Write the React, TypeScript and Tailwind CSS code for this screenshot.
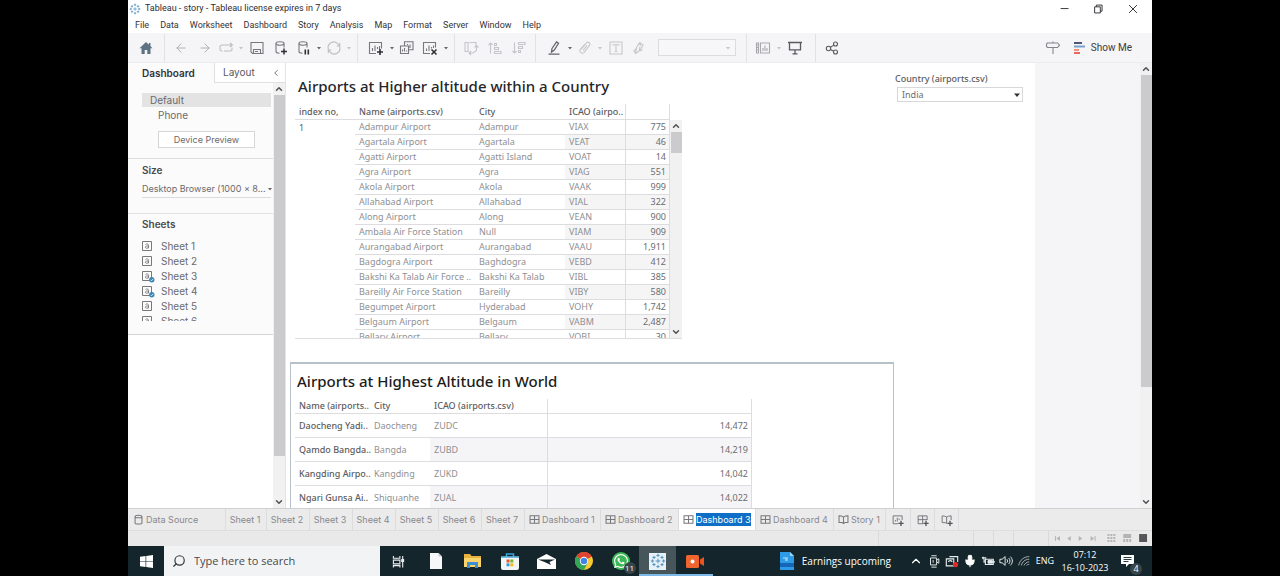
import React from "react";
import { ArrowLeft, ArrowRight, ChevronUp, ChevronDown, ChevronLeft, Search, Mic } from "lucide-react";
import { FaWhatsapp } from "react-icons/fa";

type Children = { children?: React.ReactNode };

const menus = ["File", "Data", "Worksheet", "Dashboard", "Story", "Analysis", "Map", "Format", "Server", "Window", "Help"];

const indian: [string, string, string, string][] = [
  ["Adampur Airport", "Adampur", "VIAX", "775"],
  ["Agartala Airport", "Agartala", "VEAT", "46"],
  ["Agatti Airport", "Agatti Island", "VOAT", "14"],
  ["Agra Airport", "Agra", "VIAG", "551"],
  ["Akola Airport", "Akola", "VAAK", "999"],
  ["Allahabad Airport", "Allahabad", "VIAL", "322"],
  ["Along Airport", "Along", "VEAN", "900"],
  ["Ambala Air Force Station", "Null", "VIAM", "909"],
  ["Aurangabad Airport", "Aurangabad", "VAAU", "1,911"],
  ["Bagdogra Airport", "Baghdogra", "VEBD", "412"],
  ["Bakshi Ka Talab Air Force ..", "Bakshi Ka Talab", "VIBL", "385"],
  ["Bareilly Air Force Station", "Bareilly", "VIBY", "580"],
  ["Begumpet Airport", "Hyderabad", "VOHY", "1,742"],
  ["Belgaum Airport", "Belgaum", "VABM", "2,487"],
  ["Bellary Airport", "Bellary", "VOBI", "30"],
];

const world: [string, string, string, string][] = [
  ["Daocheng Yadi..", "Daocheng", "ZUDC", "14,472"],
  ["Qamdo Bangda..", "Bangda", "ZUBD", "14,219"],
  ["Kangding Airpo..", "Kangding", "ZUKD", "14,042"],
  ["Ngari Gunsa Ai..", "Shiquanhe", "ZUAL", "14,022"],
];

function Glyph({ children, className = "text-[#77777c]" }: Children & { className?: string }) {
  return (
    <svg viewBox="0 0 16 16" className={`h-4 w-4 ${className}`} fill="none" stroke="currentColor" strokeWidth="1.1" aria-hidden="true">
      {children}
    </svg>
  );
}

function Tool({ label, width = "w-6", children }: Children & { label: string; width?: string }) {
  return (
    <button aria-label={label} className={`flex h-6 shrink-0 items-center justify-center ${width}`}>
      {children}
    </button>
  );
}

function Caret({ dim = false }: { dim?: boolean }) {
  return (
    <svg viewBox="0 0 8 8" className={`h-2 w-2 shrink-0 ${dim ? "text-[#c4c4c8]" : "text-[#66666b]"}`} aria-hidden="true">
      <path d="M2 3h4L4 5.4z" fill="currentColor" />
    </svg>
  );
}

const Sep = ({ space = "mx-1" }: { space?: string }) => <span className={`h-7 w-px shrink-0 bg-[#e2e2e5] ${space}`} />;

const dim = "text-[#c6c6ca]";

function Toolbar() {
  return (
    <div className="flex h-[30px] shrink-0 items-center border-b border-[#ececee] bg-[#f5f4f6]">
      <Tool label="Start page" width="w-9">
        <Glyph className="text-[#5d7282]">
          <path d="M8 2 1.5 8.3h2V14h3.2v-4h2.6v4h3.2V8.3h2L12.5 6.200V3h-1.600v1.700z" fill="currentColor" stroke="none" />
        </Glyph>
      </Tool>
      <Sep space="mr-1" />
      <Tool label="Undo"><ArrowLeft className="size-3.5 text-[#acacb0]" strokeWidth={1.6} /></Tool>
      <Tool label="Redo"><ArrowRight className="size-3.5 text-[#acacb0]" strokeWidth={1.6} /></Tool>
      <Tool label="Replay" width="w-5">
        <Glyph className="text-[#bdbdc1]"><path d="M3.500 11H2.800A1.800 1.800 0 0 1 1 9.200V7a2 2 0 0 1 2-2h10M11 3l2.400 2L11 7M13 7.500v1.700A1.800 1.800 0 0 1 11.200 11H5" /></Glyph>
      </Tool>
      <Caret dim />
      <Tool label="Save">
        <Glyph><path d="M2 2.500h12v11H3.500L2 12zM4.500 13V9.500h7V13M6 11.500h3" /></Glyph>
      </Tool>
      <Tool label="New data source">
        <Glyph>
          <ellipse cx="7" cy="3.500" rx="4" ry="1.700" /><path d="M3 3.500v8c0 1 1.500 1.700 3.500 1.700M11 3.500v4" />
          <path d="M11 8.500v6M8 11.500h6" stroke="#303034" strokeWidth="1.500" />
        </Glyph>
      </Tool>
      <Tool label="Pause auto updates" width="w-[22px]">
        <Glyph>
          <ellipse cx="7" cy="3.500" rx="4" ry="1.700" /><path d="M3 3.500v8c0 1 1.500 1.700 3.500 1.700M11 3.500v4" />
          <path d="M9.300 9.500v5M12.300 9.500v5" stroke="#303034" strokeWidth="1.600" />
        </Glyph>
      </Tool>
      <Caret />
      <Tool label="Run update" width="w-[22px]">
        <Glyph className="text-[#c0c0c4]"><path d="M2.500 9.500A5.500 5.500 0 0 1 12 4.200L13.500 6M13.500 6.500A5.500 5.500 0 0 1 4 11.800L2.500 10M13.700 2.800V6h-3M2.300 13.200V10h3" /></Glyph>
      </Tool>
      <Caret dim />
      <Sep space="ml-1 mr-1.5" />
      <Tool label="New worksheet">
        <Glyph>
          <path d="M8 13.500H1.500v-11h12v6M4.500 11V8M7 11V5.500M9.500 9V7M11.500 9V6" />
          <path d="M12 9v6M9 12h6" stroke="#303034" strokeWidth="1.600" />
        </Glyph>
      </Tool>
      <Caret />
      <Tool label="Duplicate" width="w-[22px]">
        <Glyph><path d="M5.500 6V1.800H14v8H9.500M1.500 6h8v7.500h-8zM3.500 11.500V9.500M5.500 11.500V8M7.500 11.500v-1M8.500 5V4M11 8V4.500" /></Glyph>
      </Tool>
      <Tool label="Clear sheet">
        <Glyph>
          <path d="M8 13.500H1.500v-11h12v5M4.500 11V8.500M7 11V5.500M9.500 8.500V7M11.500 8V5.500" />
          <path d="m9.500 9.500 5 5M14.500 9.500l-5 5" stroke="#303034" strokeWidth="1.600" />
        </Glyph>
      </Tool>
      <Caret />
      <Sep />
      <Tool label="Swap rows and columns">
        <Glyph className={dim}><path d="M2 2.500h3v9H2zM6.500 2.500H13v3M13.500 6v4.500L10 13H6M8 11l-2 2 2 2M11.500 7.500l2-2 2 2" /></Glyph>
      </Tool>
      <Tool label="Sort ascending">
        <Glyph className={dim}><path d="M3.500 13.500V3M1.500 5l2-2 2 2M7.500 3.500h2v2h-2zM7.500 7.500h4v2h-4zM7.500 11.500h6.500v2H7.500z" /></Glyph>
      </Tool>
      <Tool label="Sort descending">
        <Glyph className={dim}><path d="M3.500 2.500V13M1.500 11l2 2 2-2M7.500 2.500H14v2H7.500zM7.500 6.500h4v2h-4zM7.500 10.500h2v2h-2z" /></Glyph>
      </Tool>
      <Sep space="ml-1 mr-1.5" />
      <Tool label="Highlight">
        <Glyph className="text-[#66666b]"><path d="m6 8.500 4.500-6.500 2 1.300-4.200 6.700L5.500 12zM2.500 14.200h11" strokeWidth="1.300" /></Glyph>
      </Tool>
      <Caret />
      <Tool label="Group members" width="w-[22px]">
        <Glyph className={dim}><path d="m4.500 9 4.800-6a2 2 0 0 1 3.200 2.400l-5.600 7.200A2.500 2.500 0 0 1 3 9.800L8 4M6 10.500l4-5.200" /></Glyph>
      </Tool>
      <Caret dim />
      <Tool label="Show mark labels">
        <Glyph className={dim}><path d="M2 2h12v12H2zM5 5.500V4.800h6v.7M8 4.800v6.700M6.800 11.500h2.400" /></Glyph>
      </Tool>
      <Tool label="Fix axes" width="w-[22px]">
        <Glyph className={dim}><path d="M8.500 2.500 5 8.500 3.500 11M5.500 8.500 4.500 13.500M2.500 10.500l2 3 3-2M8.500 2.500 12 5l-3 6M9 7l-1 4 3.500-1M8.500 2.500l1 3.500" /></Glyph>
      </Tool>
      <select aria-label="Fit" className="ml-2 h-[17px] w-[78px] shrink-0 appearance-none rounded-none border border-[#dcdcdf] bg-[#f7f6f8]" />
      <span className="-ml-3 mr-2 flex"><Caret dim /></span>
      <Sep space="ml-1.5 mr-1" />
      <Tool label="Show cards">
        <Glyph className="text-[#a9a9ad]"><path d="M1.500 3h2v10h-2zM5.500 3h9v10h-9zM2 5h1M2 7.500h1M2 10h1M8 11V8M10 11V5.500M12 11V8" /></Glyph>
      </Tool>
      <Caret dim />
      <Tool label="Presentation mode">
        <Glyph className="text-[#5a5a5f]"><path d="M1 2.500h14M2.500 2.500v7.300h11V2.500M8 9.800v4M5.500 13.800h5" strokeWidth="1.300" /></Glyph>
      </Tool>
      <Sep space="ml-2 mr-1" />
      <Tool label="Share">
        <Glyph className="text-[#5a5a5f]"><circle cx="4.500" cy="8.500" r="2.200" /><circle cx="11.500" cy="4" r="2" /><circle cx="11.500" cy="12" r="2" /><path d="m6.400 7.300 3.400-2.200M6.400 9.600l3.400 1.600" /></Glyph>
      </Tool>
      <span className="flex-1" />
      <Tool label="Guide">
        <Glyph className="text-[#85858a]"><path d="M2.500 3h10l2 2.200-2 2.300h-10l-1-1V4zM8 7.500V14M8 1.500V3" /></Glyph>
      </Tool>
      <button className="ml-2 mr-5 flex items-center gap-1 font-[Roboto,sans-serif] text-[10px] text-[#3c3c40]">
        <svg viewBox="0 0 14 14" className="size-3.5" aria-hidden="true">
          <path d="M1 1h8v2H1z" fill="#4c5a78" /><path d="M1 4.500h11v2H1z" fill="#7aa0cc" /><path d="M1 8h5v2H1z" fill="#f0907e" /><path d="M1 11h6v2H1z" fill="#e8695a" />
        </svg>
        Show Me
      </button>
    </div>
  );
}

function Scrollbar({ thumb }: { thumb: string }) {
  return (
    <div className="flex w-3 shrink-0 flex-col items-center bg-[#f1f1f2]">
      <ChevronUp className="my-px size-2.5 shrink-0 text-[#505055]" strokeWidth={3.500} />
      <div className="min-h-0 w-[11px] flex-1"><div className={`bg-[#cbcbcd] ${thumb}`} /></div>
      <ChevronDown className="my-px size-2.5 shrink-0 text-[#505055]" strokeWidth={3.500} />
    </div>
  );
}

function SheetItem({ name, used }: { name: string; used: boolean }) {
  return (
    <li className="flex h-[15px] items-center gap-1.5">
      <svg viewBox="0 0 13 13" className="size-[13px]" fill="none" aria-hidden="true">
        <path d="M.500 1.500h9v9h-9z" stroke="#77777c" />
        <path d="M3.500 4.500c1-1 3-.8 3 .8v3M6.500 6H4.800C3 6 3 8.300 4.700 8.300c1 0 1.800-.6 1.800-1.500" stroke="#77777c" strokeWidth=".9" />
        {used && <circle cx="9.800" cy="9.800" r="2.700" fill="#3a86b5" />}
        {used && <path d="m8.500 9.800 1 1 1.700-2" stroke="#fff" strokeWidth=".7" />}
      </svg>
      {name}
    </li>
  );
}

function SidePanel() {
  return (
    <aside className="flex w-[158px] shrink-0 flex-col border-r border-[#e4e4e6] bg-white font-[Inter,sans-serif] text-[10px] text-[#6a6a6e]">
      <div className="flex h-5 shrink-0">
        <button className="w-[86px] bg-[#fbfbfb] pl-3.5 text-left text-[10px] font-semibold text-[#333337]">Dashboard</button>
        <button className="flex flex-1 items-center justify-between border-b border-l border-[#e0e0e2] px-1 pl-2 text-[10px] text-[#5a5a5e]">
          Layout <ChevronLeft className="size-2.5" strokeWidth={2} />
        </button>
      </div>
      <div className="flex min-h-0 flex-1">
        <div className="min-w-0 flex-1">
          <section className="border-b border-[#dcdcde] bg-[#fbfbfb] pb-2.5 pl-3.5 pr-0.5 pt-2.5">
            <div className="h-[14px] bg-[#e3e3e4] pl-2 leading-[14px]">Default</div>
            <div className="h-4 pl-4 leading-4">Phone</div>
            <button className="mx-4 mt-2 block h-[17px] w-[97px] border border-[#d6d6d8] bg-white text-[9px]">Device Preview</button>
          </section>
          <section className="border-b border-[#e3e3e5] bg-[#fbfbfb] pb-[15px] pl-3.5 pr-0.5 pt-1">
            <h2 className="h-[14px] font-semibold leading-[14px] text-[#4a4a4e]">Size</h2>
            <button className="mt-1 flex h-[17px] w-full items-center justify-between whitespace-nowrap border-b border-[#dcdcde] text-[9px]">
              <span>Desktop Browser (1000 x 8...</span> <Caret />
            </button>
          </section>
          <section className="border-b border-[#d4d4d6] bg-[#fbfbfb] pb-[13px] pl-3.5 pt-[3px]">
            <h2 className="h-[14px] font-semibold leading-[14px] text-[#4a4a4e]">Sheets</h2>
            <ul className="mt-2 h-[82px] overflow-hidden">
              {[1, 2, 3, 4, 5, 6].map((n) => <SheetItem key={n} name={`Sheet ${n}`} used={n === 3 || n === 4} />)}
            </ul>
          </section>
        </div>
        <Scrollbar thumb="h-[90%]" />
      </div>
    </aside>
  );
}

const line = "border-[#dddde0]";

function IndiaTable() {
  return (
    <div className={`flex h-[235px] w-fit border-b ${line}`}>
      <div className="overflow-hidden">
        <table className="w-[375px] table-fixed border-separate border-spacing-0 text-left text-[9px] text-[#8f8f93]">
          <colgroup><col className="w-[60px]" /><col className="w-[120px]" /><col className="w-[90px]" /><col className="w-[60px]" /><col className="w-[45px]" /></colgroup>
          <thead className="text-[#5c5c60]">
            <tr className="h-4">
              {["index no,", "Name (airports.csv)", "City", "ICAO (airpo.."].map((h) => (
                <th key={h} className={`whitespace-nowrap border-b p-0 pl-1 font-medium leading-[15px] ${line}`}>{h}</th>
              ))}
              <th aria-label="Elevation" className={`border-x border-b p-0 ${line}`} />
            </tr>
          </thead>
          <tbody>
            {indian.map(([name, city, code, value], i) => {
              const band = i % 2 === 1 ? "bg-[#f5f5f6]" : "";
              return (
                <tr key={code} className="h-[15px]">
                  <td className="p-0 pl-1 leading-[14px] text-[#5c5c60]">{i === 0 ? "1" : ""}</td>
                  <td className={`whitespace-nowrap border-b p-0 pl-1 leading-[14px] ${line}`}>{name}</td>
                  <td className={`whitespace-nowrap border-b p-0 pl-1 leading-[14px] ${line}`}>{city}</td>
                  <td className={`border-b p-0 pl-1 leading-[14px] ${line} ${band}`}>{code}</td>
                  <td className={`border-x border-b p-0 pr-[3px] text-right leading-[14px] text-[#6c6c70] ${line} ${band}`}>{value}</td>
                </tr>
              );
            })}
          </tbody>
        </table>
      </div>
      <div className="mt-4 flex"><Scrollbar thumb="h-[21px]" /></div>
    </div>
  );
}

function WorldTable() {
  return (
    <table className="w-[457px] table-fixed border-separate border-spacing-0 text-left text-[9px] text-[#8f8f93]">
      <colgroup><col className="w-[75px]" /><col className="w-[60px]" /><col className="w-[117px]" /><col className="w-[205px]" /></colgroup>
      <thead className="text-[#5c5c60]">
        <tr className="h-[15px]">
          {["Name (airports..", "City", "ICAO (airports.csv)"].map((h) => (
            <th key={h} className={`whitespace-nowrap border-b p-0 pl-1 font-medium leading-[14px] ${line}`}>{h}</th>
          ))}
          <th aria-label="Elevation" className={`border-x border-b p-0 ${line}`} />
        </tr>
      </thead>
      <tbody>
        {world.map(([name, city, code, value], i) => {
          const band = i % 2 === 1 ? "bg-[#f5f5f7]" : "";
          return (
            <tr key={code} className="h-6">
              <td className={`whitespace-nowrap border-b p-0 pl-1 font-medium text-[#5c5c60] ${line}`}>{name}</td>
              <td className={`border-b p-0 pl-1 ${line}`}>{city}</td>
              <td className={`border-b p-0 pl-1 ${line} ${band}`}>{code}</td>
              <td className={`border-x border-b p-0 pr-[3px] text-right text-[#6c6c70] ${line} ${band}`}>{value}</td>
            </tr>
          );
        })}
      </tbody>
    </table>
  );
}

function Canvas() {
  return (
    <main className="flex min-w-0 flex-1 bg-[#f5f5f7] font-['Noto_Sans',sans-serif]">
      <div className="flex min-w-0 flex-1 overflow-hidden">
        <div className="flex w-[749px] items-start justify-between bg-white pl-1">
          <div className="w-[604px]">
            <section className="pl-[5px] pt-[11px]">
              <h1 className="mb-1.5 h-6 pl-[3px] text-[15px] font-medium leading-6 text-[#26262a]">Airports at Higher altitude within a Country</h1>
              <IndiaTable />
            </section>
            <section className="mt-[23px] border border-b-0 border-t-2 border-[#b7c1c8] pl-1 pt-1">
              <h1 className="mb-[5px] h-[26px] pl-0.5 text-[15px] font-medium leading-[26px] text-[#1c1c20]">Airports at Highest Altitude in World</h1>
              <WorldTable />
            </section>
          </div>
          <div className="mr-3 mt-2 w-[128px] text-[9px] text-[#5c5c60]">
            <label htmlFor="country" className="block h-4 font-medium leading-4">Country (airports.csv)</label>
            <div className="relative ml-0.5 flex items-center">
              <select id="country" className="h-[15px] w-full appearance-none border border-[#d8d8da] bg-white pl-1 text-[9px] leading-[13px] text-[#6c6c70]">
                <option>India</option>
              </select>
              <svg viewBox="0 0 8 8" className="pointer-events-none absolute right-0.5 size-2 text-[#333337]" aria-hidden="true"><path d="M1 2.500h6L4 6z" fill="currentColor" /></svg>
            </div>
          </div>
        </div>
      </div>
      <Scrollbar thumb="h-[74%]" />
    </main>
  );
}

const GridIcon = () => <Glyph className="size-[11px]! shrink-0 text-[#77777c]"><path d="M1.500 2.500h13v11h-13zM8 2.500v11M1.500 8h13" strokeWidth="1.500" /></Glyph>;
const BookIcon = () => <Glyph className="size-[11px]! shrink-0 text-[#77777c]"><path d="M8 4.500C6 3 4 2.500 1.500 2.500v10H6l2 1.500 2-1.500h4.500v-10C12 2.500 10 3 8 4.500zM8 4.500V14" strokeWidth="1.500" /></Glyph>;

function TabBar() {
  const tab = "flex shrink-0 items-center border-r border-[#dcdcde]";
  return (
    <nav className="flex h-[22px] shrink-0 border-t border-[#d0d0d2] bg-[#ebebec] font-[Inter,sans-serif] text-[9px] text-[#88888c]">
      <button className={`${tab} w-[98px] gap-0.5 pl-[5px]`}>
        <Glyph className="size-[11px]! text-[#77777c]"><path d="M3 4c0-3 10-3 10 0v9c0 2-10 2-10 0zM3 4c0 2 10 2 10 0" strokeWidth="1.500" /></Glyph>
        Data Source
      </button>
      {[1, 2, 3, 4, 5, 6, 7].map((n) => <button key={n} className={`${tab} w-[43px] justify-center pr-0.5 nth-2:w-[41px]`}>Sheet {n}</button>)}
      <button className={`${tab} w-[76px] gap-0.5 pl-1`}><GridIcon />Dashboard 1</button>
      <button className={`${tab} w-[78px] gap-0.5 pl-1`}><GridIcon />Dashboard 2</button>
      <button className={`${tab} w-[77px] gap-0.5 bg-white pl-1`}><GridIcon /><span className="bg-[#0f6fc6] text-white">Dashboard 3</span></button>
      <button className={`${tab} w-[78px] gap-0.5 pl-1`}><GridIcon />Dashboard 4</button>
      <button className={`${tab} w-[52px] gap-0.5 pl-1`}><BookIcon />Story 1</button>
      <button aria-label="New worksheet" className={`${tab} w-[25px] justify-center`}>
        <Glyph className="size-3! text-[#77777c]"><path d="M8 13H1.500V2.500h12V8M4.500 10V8M7 10V5M9.500 8V6" strokeWidth="1.300" /><path d="M12 9v7M8.500 12.500h7" stroke="#55555a" strokeWidth="1.800" /></Glyph>
      </button>
      <button aria-label="New dashboard" className={`${tab} w-6 justify-center`}>
        <Glyph className="size-3! text-[#77777c]"><path d="M8 13H1.500V2.500h12V8M7.500 2.500V13M1.500 7.500h12" strokeWidth="1.300" /><path d="M12 9v7M8.500 12.500h7" stroke="#55555a" strokeWidth="1.800" /></Glyph>
      </button>
      <button aria-label="New story" className={`${tab} w-6 justify-center`}>
        <Glyph className="size-3! text-[#77777c]"><path d="M8 13l-2-1.500H1.500v-9C4 2.500 6 3 7.500 4 9 3 11 2.500 13.500 2.500V8M7.500 4v8" strokeWidth="1.300" /><path d="M12 9v7M8.500 12.500h7" stroke="#55555a" strokeWidth="1.800" /></Glyph>
      </button>
    </nav>
  );
}

function StatusBar() {
  return (
    <footer className="flex h-4 shrink-0 items-stretch justify-end border-t border-[#dededf] bg-[#e9e9ea]">
      <span className="w-[95px] border-l border-[#dadadc]" />
      <span className="w-5 border-l border-[#dadadc]" />
      <span className="w-5 border-l border-[#dadadc]" />
      <span className="w-[35px] border-l border-[#dadadc]" />
      <svg viewBox="0 0 104 15" className="w-[104px] border-l border-[#dadadc]" aria-hidden="true">
        <g fill="#b4b4b7">
          <path d="M6 5h1v5H6zM11 5v5L7.500 7.500zM22 5v5l-3.500-2.500zM30 5v5l3.500-2.500zM42 5v5l3.500-2.500zM46 5h1v5h-1z" />
          <path d="M59 3h2v2h-2zM62 3h2v2h-2zM65 3h2v2h-2zM59 6h2v2h-2zM62 6h2v2h-2zM65 6h2v2h-2zM59 9h2v2h-2zM62 9h2v2h-2zM65 9h2v2h-2z" />
          <path d="M75 3h8v4h-8zM75 8h2v3h-2zM78 8h2v3h-2zM81 8h2v3h-2z" />
        </g>
        <path d="M91 3h8v8h-8z" fill="#55555a" />
      </svg>
    </footer>
  );
}

function TableauMark({ className }: { className: string }) {
  return (
    <svg viewBox="0 0 20 20" className={className} aria-hidden="true">
      <path d="M10 7v6M7 10h6M10 1v4M8 3h4M10 15v4M8 17h4M3 8v4M1 10h4M17 8v4M15 10h4M5 3.500v4M3 5.500h4M15 3.500v4M13 5.500h4M5 12.500v4M3 14.500h4M15 12.500v4M13 14.500h4" stroke="currentColor" strokeWidth="1.200" />
    </svg>
  );
}

function TaskButton({ label, active, running, children }: Children & { label: string; active?: boolean; running?: boolean }) {
  return (
    <button aria-label={label} className={`flex w-[37px] shrink-0 items-center justify-center border-b-2 pt-0.5 ${active ? "bg-[#47565b]" : ""} ${active || running ? "border-[#7cb8e8]" : "border-transparent"}`}>
      {children}
    </button>
  );
}

function Taskbar() {
  return (
    <div className="flex h-[30px] shrink-0 items-stretch bg-[#14262b] font-['Open_Sans',sans-serif] text-white">
      <button aria-label="Start" className="flex w-9 shrink-0 items-center justify-center">
        <svg viewBox="0 0 14 14" className="size-[13px]" fill="#fff" aria-hidden="true"><path d="M0 2l6-.9v5.600H0zM6.700 1 14 0v6.700H6.700zM0 7.300h6v5.600L0 12zM6.700 7.300H14V14l-7.300-1z" /></svg>
      </button>
      <label className="flex w-[216px] shrink-0 items-center gap-2 bg-[#f2f3f4] pl-2">
        <Search className="size-3.5 -scale-x-100 text-[#333]" strokeWidth={2} />
        <input aria-label="Search" placeholder="Type here to search" className="w-40 bg-transparent text-[11px] outline-none placeholder:text-[#4a4a4e]" />
      </label>
      <TaskButton label="Task view">
        <svg viewBox="0 0 14 14" className="size-[13px]" fill="none" stroke="#e8ecee" strokeWidth="1.200" aria-hidden="true"><path d="M1.500 1v2.500h7V1M1.500 5.500h7v4h-7zM1.500 13.500v-2h7v2M11.500 1v12.500" /><path d="M10.500 5h2v2h-2z" fill="#e8ecee" /></svg>
      </TaskButton>
      <TaskButton label="Document">
        <svg viewBox="0 0 12 16" className="h-4 w-3" aria-hidden="true"><path d="M0 0h8.500L12 3.500V16H0z" fill="#f5f7f8" /><path d="M8.500 0v3.500H12z" fill="#c8ced2" /></svg>
      </TaskButton>
      <TaskButton label="File Explorer">
        <svg viewBox="0 0 17 14" className="h-3.5 w-[17px]" aria-hidden="true"><path d="M0 0h6l1.500 2H17v11H0z" fill="#e9b23c" /><path d="M0 4h17v9H0z" fill="#f9d36b" /><path d="M3 8h11v6h-3v-3H6v3H3z" fill="#3c8fd0" /></svg>
      </TaskButton>
      <TaskButton label="Store">
        <svg viewBox="0 0 18 17" className="h-[17px] w-[18px]" aria-hidden="true"><path d="M5.500 4V1h7v3" fill="none" stroke="#35a4e0" strokeWidth="1.500" /><path d="M0 3.500h18V15a2 2 0 0 1-2 2H2a2 2 0 0 1-2-2z" fill="#f3f5f7" /><path d="M0 3.500h18v1.200H0z" fill="#35a4e0" /><path d="M5.500 6.500h3v3h-3z" fill="#e8552d" /><path d="M9.300 6.500h3v3h-3z" fill="#7db72f" /><path d="M5.500 10.300h3v3h-3z" fill="#2c9fdd" /><path d="M9.300 10.300h3v3h-3z" fill="#f5b81f" /></svg>
      </TaskButton>
      <TaskButton label="Mail">
        <svg viewBox="0 0 19 15" className="h-[15px] w-[19px]" aria-hidden="true"><path d="M0 5 9.500 0 19 5v10H0z" fill="#fff" /><path d="M1 5.500h17l-5.500 2.500L14 11 7.500 8z" fill="#14262b" /></svg>
      </TaskButton>
      <TaskButton label="Chrome">
        <svg viewBox="0 0 18 18" className="size-[18px]" aria-hidden="true">
          <circle cx="9" cy="9" r="9" fill="#f9c932" />
          <path d="M9 9 1.200 4.500A9 9 0 0 1 16.800 4.500z" fill="#df4433" />
          <path d="M9 9 1.200 4.500A9 9 0 0 0 9 18l3.500-7z" fill="#34a457" />
          <circle cx="9" cy="9" r="4.200" fill="#fff" /><circle cx="9" cy="9" r="3.300" fill="#4285e8" />
        </svg>
      </TaskButton>
      <TaskButton label="WhatsApp">
        <span className="relative flex size-[18px] items-center justify-center rounded-full bg-[#3cb956]">
          <FaWhatsapp className="size-4 text-white" />
          <span className="absolute -bottom-1 -right-1.5 flex size-3 items-center justify-center rounded-full bg-[#38464a] text-[8px] leading-3">11</span>
        </span>
      </TaskButton>
      <TaskButton label="Tableau" active>
        <span className="flex size-[17px] items-center justify-center bg-[#e9f1f8]"><TableauMark className="size-4 text-[#4b8fc0]" /></span>
      </TaskButton>
      <TaskButton label="Screen recorder" running>
        <svg viewBox="0 0 18 13" className="h-[13px] w-[18px]" aria-hidden="true"><rect width="13" height="13" rx="1.500" fill="#f0642f" /><path d="m14 4.500 4-2.500v9l-4-2.500z" fill="#e8551f" /><circle cx="6.500" cy="6.500" r="2" fill="#fff" /></svg>
      </TaskButton>
      <span className="flex-1" />
      <button className="mr-4 flex items-center gap-2 whitespace-nowrap text-[10px]">
        <svg viewBox="0 0 14 18" className="h-[18px] w-3.5" aria-hidden="true"><path d="M0 0h10l4 4v14H0z" fill="#2d9be8" /><path d="M10 0v4h4z" fill="#9fd4f8" /><path d="M0 11h14v4H0z" fill="#1467b8" /><path d="M3 6h3v3M7 9V5" stroke="#bfe2fa" fill="none" /></svg>
        Earnings upcoming
      </button>
      <div className="flex items-center">
        <button aria-label="Show hidden icons" className="flex w-[18px] justify-center"><ChevronUp className="size-3.5" strokeWidth={2} /></button>
        <Glyph className="mx-0.5 size-3.5! text-[#e8ecee]"><path d="M4 4.500h7v8H4zM5 2h6M5 15h6M11 7l2.500-1.500v5L11 9M7 7v3" /></Glyph>
        <Glyph className="mx-0.5 size-3.5! text-[#e8ecee]"><path d="M5 3h9.500v6M1.500 5.500h8.500v8H1.500zM4 9c0-2 4-2 4 0" strokeWidth="1.300" /><circle cx="12" cy="12" r="3" fill="#e02a2a" stroke="none" /></Glyph>
        <Mic className="mx-0.5 size-3.5 fill-white" strokeWidth={1.800} />
        <Glyph className="mx-0.5 size-3.5! text-[#e8ecee]"><path d="M5 6h9v6H5zM15 8v2M1 4.500h5M2.500 3v3M3.500 6v4" strokeWidth="1.300" /><path d="M8 7.500h5v3H8z" fill="currentColor" /></Glyph>
        <Glyph className="mx-0.5 size-3.5! text-[#e8ecee]"><path d="M1 6h2.500L7 3v10l-3.500-3H1zM9 6c1 1 1 3 0 4M11 4.500c2 2 2 5 0 7M13 3c3 3 3 7 0 10" /></Glyph>
        <Glyph className="mx-0.5 size-3.5! text-[#aab4b8]"><path d="M2 13C3 7 8 3 14 3M5 13c1-4 4-7 9-7M8 13c1-2 3-4 6-4M11 13c1-1 2-1 3-1" /></Glyph>
        <span className="w-6 text-center text-[9px]">ENG</span>
        <span className="w-14 text-center text-[9px] leading-[13px]">07:12<br />16-10-2023</span>
        <button aria-label="Notifications" className="relative ml-2 mr-4 flex size-[15px]">
          <svg viewBox="0 0 14 14" className="size-3.5" aria-hidden="true"><path d="M0 1h13v9H8l-3 3v-3H0z" fill="#fff" /><path d="M2.500 3.500h8M2.500 5.500h8M2.500 7.500h5" stroke="#14262b" strokeWidth=".9" /></svg>
          <span className="absolute -bottom-1.5 -right-1.5 flex size-3 items-center justify-center rounded-full bg-[#38464a] text-[9px] leading-none">4</span>
        </button>
      </div>
    </div>
  );
}

export default function App() {
  return (
    <div className="h-screen bg-black px-[10%]">
      <div className="flex h-full flex-col overflow-hidden bg-white">
        <header className="flex h-[17px] shrink-0 items-center gap-1 pl-px font-[Roboto,sans-serif] text-[9px] text-[#2c2c30]">
          <TableauMark className="size-3 text-[#4b8fc0]" />
          <span className="flex-1">Tableau - story - Tableau license expires in 7 days</span>
          <div className="mr-3 flex gap-5">
            {[
              ["Minimize", "M3 7.500h9"],
              ["Restore", "M3 5.500h6.500v7H3zM5 5.500V3.500h6.500v7h-2"],
              ["Close", "m3.500 3.500 9 9M12.500 3.500l-9 9"],
            ].map(([label, d]) => (
              <button key={label} aria-label={label} className="flex w-3.5"><Glyph className="size-3.5! text-[#333337]"><path d={d} /></Glyph></button>
            ))}
          </div>
        </header>
        <nav className="flex h-4 shrink-0 items-center gap-[11px] pl-[7px] pt-px font-[Roboto,sans-serif] text-[9px] text-[#333337]">
          {menus.map((m) => <button key={m}>{m}</button>)}
        </nav>
        <Toolbar />
        <div className="flex min-h-0 flex-1"><SidePanel /><Canvas /></div>
        <TabBar />
        <StatusBar />
        <Taskbar />
      </div>
    </div>
  );
}
